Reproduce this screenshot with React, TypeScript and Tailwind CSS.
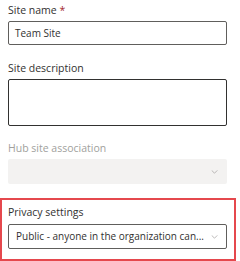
import React from 'react';

const Chevron = ({ className }: { className?: string }) => (
  <svg viewBox="0 0 8 5" className={className} fill="none" stroke="currentColor" strokeWidth={0.9}>
    <path d="M0.5 0.5 L4 4 L7.5 0.5" />
  </svg>
);

export default function App() {
  return (
    <div className="w-[240px] h-[261px] bg-white text-[10px] text-[#323130] font-['Open_Sans',sans-serif] overflow-hidden">
      <div className="px-2">
        <div className="h-[21px] leading-[21px] text-[10.5px] font-medium">
          Site name <span className="text-[#a4262c]">*</span>
        </div>
        <div className="w-[219px] h-[24px] border border-[#605e5c] rounded-[2px] flex items-center px-[6px]">
          Team Site
        </div>

        <div className="mt-[13px] h-[21px] leading-[21px] text-[10.5px] font-medium">Site description</div>
        <div className="w-[219px] h-[47px] border border-[#323130] rounded-[2px]"></div>

        <div className="mt-[12px] h-[21px] leading-[21px] text-[10.5px] font-medium text-[#a19f9d]">Hub site association</div>
        <div className="w-[219px] h-[25px] bg-[#f3f2f1] rounded-[2px] flex items-center justify-end pr-[9px]">
          <Chevron className="w-[7px] h-[4px] text-[#a19f9d]" />
        </div>
      </div>

      <div className="mt-[14px] w-[236px] h-[63px] border-2 border-[#e5484d] px-[6px] pt-[2px]">
        <div className="h-[22px] leading-[21px] text-[10.5px] font-medium">Privacy settings</div>
        <div className="w-[219px] h-[25px] border border-[#605e5c] rounded-[2px] flex items-center pl-[7px] pr-[8px]">
          <span className="flex-1 whitespace-nowrap overflow-hidden">Public - anyone in the organization can...</span>
          <Chevron className="w-[7px] h-[4px] text-[#a19f9d] ml-1" />
        </div>
      </div>
    </div>
  );
}
